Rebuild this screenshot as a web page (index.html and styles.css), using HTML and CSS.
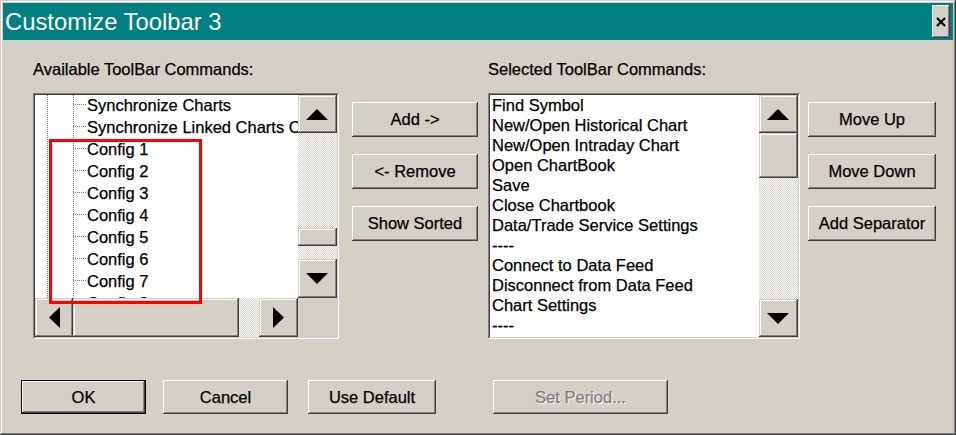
FILE: index.html
```html
<!DOCTYPE html>
<html>
<head>
<meta charset="utf-8">
<title>Customize Toolbar 3</title>
<link rel="stylesheet" href="styles.css">
</head>
<body>
<div class="window">
  <div class="titlebar">
    <span class="title">Customize Toolbar 3</span>
    <button class="close" aria-label="Close"><svg width="10" height="10" viewBox="0 0 10 10"><path d="M1 1L9 9M9 1L1 9" stroke="#000" stroke-width="2.2" fill="none"/></svg></button>
  </div>
  <div class="content">
    <div class="labels">
      <span class="label label-left">Available ToolBar Commands:</span>
      <span class="label">Selected ToolBar Commands:</span>
    </div>
    <div class="panes">
      <div class="listbox listbox-left">
        <div class="listbox-inner grid-left">
          <div class="tree">
            <div class="row"><span class="branch"></span>Synchronize Charts</div>
            <div class="row"><span class="branch"></span>Synchronize Linked Charts Cursor</div>
            <div class="row"><span class="branch"></span>Config 1</div>
            <div class="row"><span class="branch"></span>Config 2</div>
            <div class="row"><span class="branch"></span>Config 3</div>
            <div class="row"><span class="branch"></span>Config 4</div>
            <div class="row"><span class="branch"></span>Config 5</div>
            <div class="row"><span class="branch"></span>Config 6</div>
            <div class="row"><span class="branch"></span>Config 7</div>
            <div class="row"><span class="branch"></span>Config 8</div>
          </div>
          <div class="vscroll">
            <div class="sbtn up"><svg width="22" height="11" viewBox="0 0 22 11"><polygon points="11,0 22,11 0,11" fill="#000"/></svg></div>
            <div class="track track-left"><div class="thumb thumb-left"></div></div>
            <div class="sbtn down down-left"><svg width="22" height="11" viewBox="0 0 22 11"><polygon points="0,0 22,0 11,11" fill="#000"/></svg></div>
          </div>
          <div class="hscroll">
            <div class="sbtn hbtn left"><svg width="11" height="21" viewBox="0 0 11 21"><polygon points="11,0 11,21 0,10.5" fill="#000"/></svg></div>
            <div class="hthumb"></div>
            <div class="htrack"></div>
            <div class="sbtn hbtn right"><svg width="11" height="21" viewBox="0 0 11 21"><polygon points="0,0 0,21 11,10.5" fill="#000"/></svg></div>
          </div>
          <div class="corner"></div>
        </div>
        <div class="highlight"></div>
      </div>

      <div class="btncol btncol-mid">
        <button class="btn">Add -&gt;</button>
        <button class="btn">&lt;- Remove</button>
        <button class="btn">Show Sorted</button>
      </div>

      <div class="listbox listbox-right">
        <div class="listbox-inner flex-right">
          <ul class="items">
            <li>Find Symbol</li>
            <li>New/Open Historical Chart</li>
            <li>New/Open Intraday Chart</li>
            <li>Open ChartBook</li>
            <li>Save</li>
            <li>Close Chartbook</li>
            <li>Data/Trade Service Settings</li>
            <li>----</li>
            <li>Connect to Data Feed</li>
            <li>Disconnect from Data Feed</li>
            <li>Chart Settings</li>
            <li>----</li>
          </ul>
          <div class="vscroll">
            <div class="sbtn up"><svg width="22" height="11" viewBox="0 0 22 11"><polygon points="11,0 22,11 0,11" fill="#000"/></svg></div>
            <div class="track track-right"><div class="thumb thumb-right"></div></div>
            <div class="sbtn down"><svg width="22" height="11" viewBox="0 0 22 11"><polygon points="0,0 22,0 11,11" fill="#000"/></svg></div>
          </div>
        </div>
      </div>

      <div class="btncol btncol-side">
        <button class="btn">Move Up</button>
        <button class="btn">Move Down</button>
        <button class="btn">Add Separator</button>
      </div>
    </div>

    <div class="footer">
      <button class="btn fbtn btn-ok">OK</button>
      <button class="btn fbtn btn-cancel">Cancel</button>
      <button class="btn fbtn btn-default">Use Default</button>
      <button class="btn fbtn btn-period" disabled>Set Period...</button>
    </div>
  </div>
</div>
</body>
</html>
```

FILE: styles.css
```css
html, body {
  margin: 0;
  padding: 0;
  background: #d4d0c8;
}

.window {
  width: 956px;
  height: 435px;
  box-sizing: border-box;
  padding: 3px;
  background: #d4d0c8;
  box-shadow: inset -1px -1px #404040, inset 1px 1px #d4d0c8, inset -2px -2px #808080, inset 2px 2px #fff;
  font-family: "Liberation Sans", Arial, sans-serif;
  font-size: 16.5px;
  color: #000;
  display: flex;
  flex-direction: column;
}

.titlebar {
  flex: none;
  height: 37px;
  box-sizing: border-box;
  background: #008080;
  display: flex;
  align-items: center;
  justify-content: space-between;
  padding: 0 3px 0 2px;
}

.title {
  color: #fff;
  font-size: 23.8px;
  line-height: 1;
}

.close {
  width: 18px;
  height: 33px;
  padding: 0;
  margin: 0;
  border: none;
  background: #d4d0c8;
  box-shadow: inset -1px -1px #404040, inset 1px 1px #fff, inset -2px -2px #808080, inset 2px 2px #d4d0c8;
  display: flex;
  align-items: center;
  justify-content: center;
}

.content {
  flex: 1;
  padding-left: 18px;
  -webkit-text-stroke: 0.25px #000;
}

.labels {
  display: flex;
  margin: 19px 0 0 12px;
  height: 20px;
  line-height: 20px;
  white-space: nowrap;
}

.label-left {
  width: 455px;
}

.panes {
  display: flex;
  align-items: flex-start;
  margin: 14px 0 0 12px;
}

.listbox {
  position: relative;
  box-sizing: border-box;
  height: 246px;
  border: 1px solid;
  border-color: #808080 #fff #fff #808080;
}

.listbox-left {
  width: 306px;
}

.listbox-right {
  width: 312px;
  margin-left: 10px;
}

.listbox-inner {
  box-sizing: border-box;
  height: 100%;
  border: 1px solid;
  border-color: #404040 #d4d0c8 #d4d0c8 #404040;
  background: #fff;
}

.grid-left {
  display: grid;
  grid-template-columns: 263px 39px;
  grid-template-rows: 203px 39px;
}

.flex-right {
  display: flex;
}

.tree {
  overflow: hidden;
  padding-top: 0;
  background-image: linear-gradient(#808080 50%, transparent 50%), linear-gradient(#808080 50%, transparent 50%);
  background-size: 1px 2px, 1px 2px;
  background-position: 12px 0, 38px 0;
  background-repeat: repeat-y;
}

.row {
  height: 22px;
  line-height: 21px;
  display: flex;
  margin-left: 38px;
  white-space: nowrap;
}

.branch {
  flex: none;
  width: 13px;
  height: 0;
  margin-top: 9px;
  margin-right: 1px;
  border-top: 1px dotted #808080;
}

.vscroll {
  display: flex;
  flex-direction: column;
  background: #d4d0c8;
}

.sbtn {
  flex: none;
  box-sizing: border-box;
  background: #d4d0c8;
  box-shadow: inset -1px -1px #404040, inset 1px 1px #d4d0c8, inset -2px -2px #808080, inset 2px 2px #fff;
  display: flex;
  align-items: center;
  justify-content: center;
}

.vscroll .sbtn {
  height: 38px;
  padding-right: 2px;
}

.vscroll .down-left {
  height: 39px;
}

.track {
  flex: 1;
  display: flex;
  flex-direction: column;
  background: repeating-conic-gradient(#fff 0 25%, #d4d0c8 0 50%) 0 0 / 2px 2px;
}

.thumb {
  flex: none;
  box-sizing: border-box;
  background: #d4d0c8;
  box-shadow: inset -1px -1px #404040, inset 1px 1px #d4d0c8, inset -2px -2px #808080, inset 2px 2px #fff;
}

.thumb-left {
  margin-top: 95px;
  height: 18px;
}

.thumb-right {
  height: 45px;
}

.hscroll {
  display: flex;
  background: #d4d0c8;
}

.hbtn {
  width: 38px;
  padding-bottom: 1px;
}

.hbtn.right {
  width: 39px;
}

.hthumb {
  flex: none;
  width: 166px;
  box-sizing: border-box;
  background: #d4d0c8;
  box-shadow: inset -1px -1px #404040, inset 1px 1px #d4d0c8, inset -2px -2px #808080, inset 2px 2px #fff;
}

.htrack {
  flex: 1;
  background: repeating-conic-gradient(#fff 0 25%, #d4d0c8 0 50%) 0 0 / 2px 2px;
}

.corner {
  background: #d4d0c8;
}

.highlight {
  position: absolute;
  left: 15px;
  top: 45px;
  width: 153px;
  height: 165px;
  box-sizing: border-box;
  border: 3px solid #ff0000;
  pointer-events: none;
}

.items {
  flex: 1;
  list-style: none;
  margin: 0;
  padding: 0 0 0 2px;
  overflow: hidden;
  line-height: 20px;
  white-space: nowrap;
}

.listbox-right .vscroll {
  width: 39px;
  flex: none;
}

.btncol {
  display: flex;
  flex-direction: column;
  gap: 17px;
  padding-top: 9px;
}

.btncol-mid {
  width: 126px;
  margin-left: 13px;
}

.btncol-side {
  width: 128px;
  margin-left: 8px;
}

.btn {
  box-sizing: border-box;
  height: 35px;
  margin: 0;
  padding: 0;
  border: none;
  background: #d4d0c8;
  box-shadow: inset -1px -1px #404040, inset 1px 1px #fff, inset -2px -2px #808080, inset 2px 2px #d4d0c8;
  font-family: "Liberation Sans", Arial, sans-serif;
  font-size: 16.5px;
  color: #000;
  -webkit-text-stroke: 0.25px #000;
  display: flex;
  align-items: center;
  justify-content: center;
  white-space: nowrap;
}

.footer {
  display: flex;
  margin-top: 41px;
}

.fbtn {
  height: 34px;
}

.btn-ok {
  width: 125px;
  border: 1px solid #000;
  box-shadow: inset -1px -1px #404040, inset 1px 1px #fff, inset -2px -2px #808080;
}

.btn-cancel {
  width: 125px;
  margin-left: 17px;
}

.btn-default {
  width: 128px;
  margin-left: 20px;
}

.btn-period {
  width: 175px;
  margin-left: 57px;
  color: #808080;
  -webkit-text-stroke: 0.25px #808080;
  text-shadow: 1px 1px 0 #fff;
}
```
